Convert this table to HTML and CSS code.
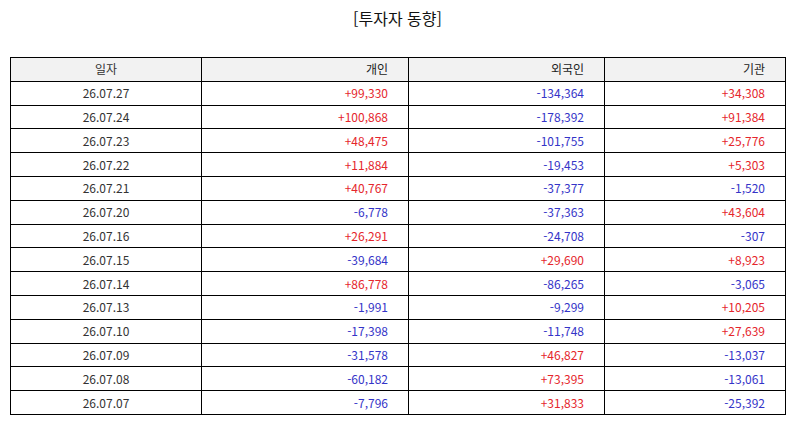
FILE: index.html
```html
<!DOCTYPE html>
<html lang="ko">
<head>
<meta charset="utf-8">
<title>투자자 동향</title>
<link rel="stylesheet" href="styles.css">
</head>
<body>
<h1 class="title">[투자자 동향]</h1>
<table class="flow">
  <colgroup>
    <col class="c-date"><col class="c-ind"><col class="c-for"><col class="c-inst">
  </colgroup>
  <thead>
    <tr><th class="center">일자</th><th>개인</th><th>외국인</th><th>기관</th></tr>
  </thead>
  <tbody>
    <tr><td class="center">26.07.27</td><td class="up">+99,330</td><td class="down">-134,364</td><td class="up">+34,308</td></tr>
    <tr><td class="center">26.07.24</td><td class="up">+100,868</td><td class="down">-178,392</td><td class="up">+91,384</td></tr>
    <tr><td class="center">26.07.23</td><td class="up">+48,475</td><td class="down">-101,755</td><td class="up">+25,776</td></tr>
    <tr><td class="center">26.07.22</td><td class="up">+11,884</td><td class="down">-19,453</td><td class="up">+5,303</td></tr>
    <tr><td class="center">26.07.21</td><td class="up">+40,767</td><td class="down">-37,377</td><td class="down">-1,520</td></tr>
    <tr><td class="center">26.07.20</td><td class="down">-6,778</td><td class="down">-37,363</td><td class="up">+43,604</td></tr>
    <tr><td class="center">26.07.16</td><td class="up">+26,291</td><td class="down">-24,708</td><td class="down">-307</td></tr>
    <tr><td class="center">26.07.15</td><td class="down">-39,684</td><td class="up">+29,690</td><td class="up">+8,923</td></tr>
    <tr><td class="center">26.07.14</td><td class="up">+86,778</td><td class="down">-86,265</td><td class="down">-3,065</td></tr>
    <tr><td class="center">26.07.13</td><td class="down">-1,991</td><td class="down">-9,299</td><td class="up">+10,205</td></tr>
    <tr><td class="center">26.07.10</td><td class="down">-17,398</td><td class="down">-11,748</td><td class="up">+27,639</td></tr>
    <tr><td class="center">26.07.09</td><td class="down">-31,578</td><td class="up">+46,827</td><td class="down">-13,037</td></tr>
    <tr><td class="center">26.07.08</td><td class="down">-60,182</td><td class="up">+73,395</td><td class="down">-13,061</td></tr>
    <tr><td class="center">26.07.07</td><td class="down">-7,796</td><td class="up">+31,833</td><td class="down">-25,392</td></tr>
  </tbody>
</table>
</body>
</html>
```
FILE: styles.css
```css
html, body {
  margin: 0;
  padding: 0;
  background: #ffffff;
}
body {
  padding: 0 9px 0 10px;
  font-family: "Noto Sans CJK KR", "Noto Sans", sans-serif;
  color: #222222;
}
.title {
  margin: 0;
  padding-top: 6px;
  height: 57px;
  box-sizing: border-box;
  text-align: center;
  font-size: 16px;
  font-weight: normal;
  line-height: 24px;
  color: #111111;
}
.flow {
  width: 775px;
  border-collapse: collapse;
  table-layout: fixed;
  font-size: 12px;
}
.c-date { width: 191px; }
.c-ind { width: 207px; }
.c-for { width: 196px; }
.c-inst { width: 181px; }
.flow th, .flow td {
  border: 1px solid #000000;
  height: 23.8px;
  padding: 0 20px 0 4px;
  text-align: right;
  line-height: 14px;
  font-weight: normal;
  box-sizing: border-box;
}
.flow th {
  background: #f2f2f2;
  color: #222222;
}
.flow td.center, .flow th.center {
  text-align: center;
  padding: 0;
  color: #333333;
}
.up { color: #e5262c; }
.down { color: #3434c8; }
```
